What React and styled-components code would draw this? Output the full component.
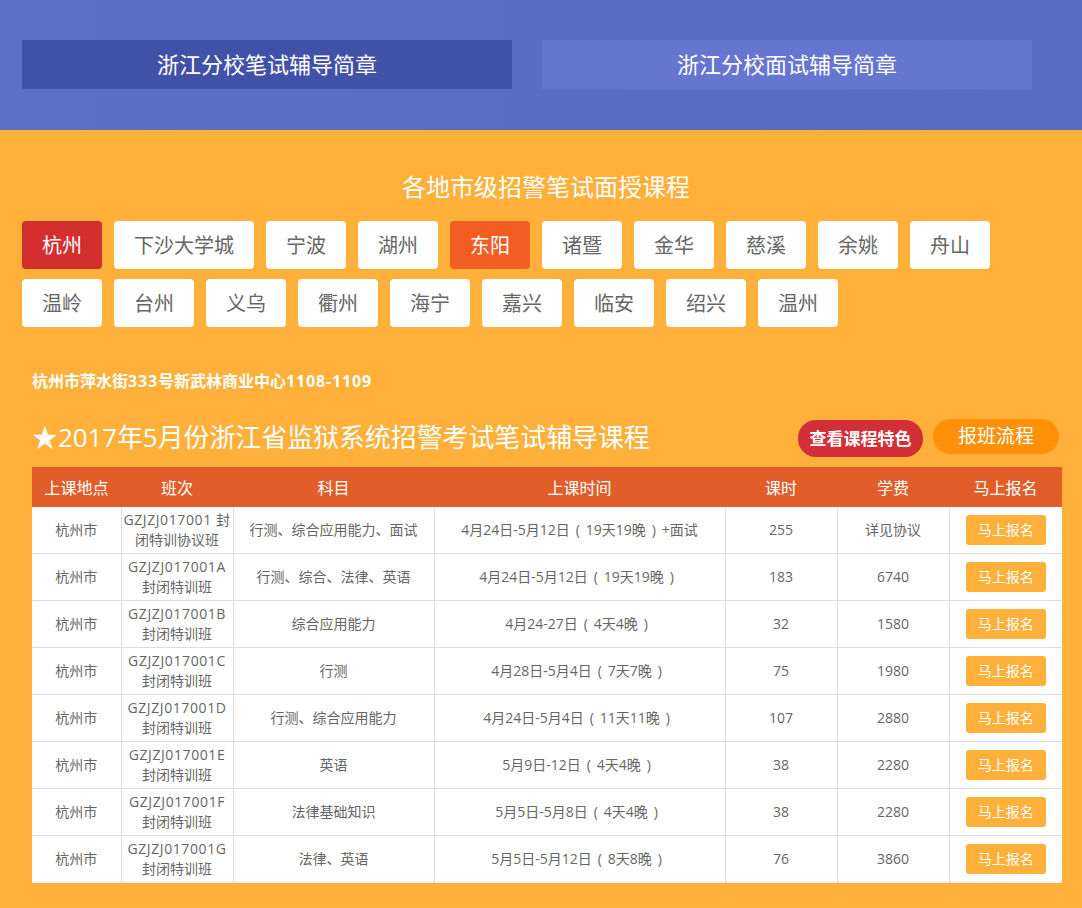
import React from 'react';
import styled, { createGlobalStyle } from 'styled-components';

const GlobalStyle = createGlobalStyle`
  html, body {
    margin: 0;
    padding: 0;
    background: #ffb03b;
  }
  body {
    font-family: "Open Sans", "Noto Sans CJK SC", sans-serif;
    color: #555;
  }
`;

const Banner = styled.header`
  height: 130px;
  box-sizing: border-box;
  padding: 40px 50px 0 22px;
  display: flex;
  gap: 30px;
  background: linear-gradient(90deg, #5e6fc5 0%, #5a6bc2 100%);
`;

const BannerLink = styled.a`
  flex: 1;
  height: 49px;
  line-height: 49px;
  text-align: center;
  color: #fff;
  font-size: 22px;
  background: ${(props) => (props.active ? '#4251a8' : '#6575d0')};
`;

const Main = styled.main`
  padding: 42px 20px 25px 22px;
`;

const SectionTitle = styled.h2`
  margin: 0 0 19px;
  padding-left: 8px;
  height: 30px;
  line-height: 30px;
  text-align: center;
  color: #fff;
  font-size: 24px;
  font-weight: 400;
`;

const Cities = styled.div`
  display: flex;
  flex-wrap: wrap;
  gap: 10px 12px;
  width: 1000px;
`;

const City = styled.a`
  height: 48px;
  line-height: 50px;
  padding: 0 20px;
  border-radius: 4px;
  font-size: 20px;
  background: ${(props) => props.bg || '#fff'};
  color: ${(props) => (props.bg ? '#fff' : '#666')};
`;

const Address = styled.p`
  margin: 42px 0 0 10px;
  height: 24px;
  line-height: 24px;
  color: #fff;
  font-size: 16px;
  font-weight: 700;
`;

const Digits = styled.span`
  letter-spacing: 0.85px;
`;

const CourseHead = styled.div`
  display: flex;
  height: 62px;
  margin: 12px 0 0 10px;
  width: 1027px;
`;

const CourseTitle = styled.h3`
  flex: 1;
  align-self: center;
  margin: 0;
  color: #fff;
  font-size: 26px;
  font-weight: 400;
  letter-spacing: -0.1px;
`;

const Pill = styled.a`
  height: ${(props) => props.h}px;
  line-height: ${(props) => props.h}px;
  margin-top: ${(props) => props.top}px;
  margin-left: 10px;
  padding: 0 ${(props) => props.pad}px;
  border-radius: 18px;
  color: #fff;
  font-size: ${(props) => props.size}px;
  font-weight: ${(props) => props.weight};
  background: ${(props) => props.bg};
`;

const Table = styled.table`
  width: 1030px;
  margin-left: 10px;
  border-collapse: collapse;
  table-layout: fixed;
  background: #fff;
  font-size: 14px;
  text-align: center;

  tbody tr:first-child td {
    border-top: 0;
  }
  tbody tr:last-child td {
    border-bottom-color: #eee;
  }
  td:first-child {
    border-left: 0;
  }
  td:last-child {
    border-right: 0;
  }
`;

const HeadCell = styled.th`
  height: 40px;
  padding: 0;
  background: #e15e2b;
  color: #fff;
  font-size: 16px;
  font-weight: 400;
`;

const Cell = styled.td`
  height: 46px;
  padding: 0;
  border: 1px solid #ddd;
  line-height: 20px;
  color: #666;
`;

const Code = styled.span`
  letter-spacing: 0.6px;
`;

const Paren = styled.span`
  display: inline-block;
  width: 16px;
  text-align: center;
`;

const SignUp = styled.a`
  display: block;
  width: 80px;
  height: 30px;
  line-height: 30px;
  margin: 0 auto;
  border-radius: 3px;
  background: #ffb03b;
  color: #fff;
`;

const cities = [
  ['杭州', '#d32f2f'], ['下沙大学城'], ['宁波'], ['湖州'], ['东阳', '#f15d22'], ['诸暨'], ['金华'], ['慈溪'], ['余姚'], ['舟山'],
  ['温岭'], ['台州'], ['义乌'], ['衢州'], ['海宁'], ['嘉兴'], ['临安'], ['绍兴'], ['温州'],
];

const columns = [
  ['上课地点', 89], ['班次', 112], ['科目', 201], ['上课时间', 291], ['课时', 112], ['学费', 112], ['马上报名', 113],
];

const courses = [
  ['GZJZJ017001 封', '闭特训协议班', '行测、综合应用能力、面试', '4月24日-5月12日', '19天19晚', '+面试', '255', '详见协议'],
  ['GZJZJ017001A', '封闭特训班', '行测、综合、法律、英语', '4月24日-5月12日', '19天19晚', '', '183', '6740'],
  ['GZJZJ017001B', '封闭特训班', '综合应用能力', '4月24-27日', '4天4晚', '', '32', '1580'],
  ['GZJZJ017001C', '封闭特训班', '行测', '4月28日-5月4日', '7天7晚', '', '75', '1980'],
  ['GZJZJ017001D', '封闭特训班', '行测、综合应用能力', '4月24日-5月4日', '11天11晚', '', '107', '2880'],
  ['GZJZJ017001E', '封闭特训班', '英语', '5月9日-12日', '4天4晚', '', '38', '2280'],
  ['GZJZJ017001F', '封闭特训班', '法律基础知识', '5月5日-5月8日', '4天4晚', '', '38', '2280'],
  ['GZJZJ017001G', '封闭特训班', '法律、英语', '5月5日-5月12日', '8天8晚', '', '76', '3860'],
];

const App = () => (
  <>
    <GlobalStyle />
    <Banner>
      <BannerLink active>浙江分校笔试辅导简章</BannerLink>
      <BannerLink>浙江分校面试辅导简章</BannerLink>
    </Banner>
    <Main>
      <SectionTitle>各地市级招警笔试面授课程</SectionTitle>
      <Cities>
        {cities.map(([name, bg]) => <City key={name} bg={bg}>{name}</City>)}
      </Cities>
      <Address>
        杭州市萍水街<Digits>333</Digits>号新武林商业中心<Digits>1108-1109</Digits>
      </Address>
      <CourseHead>
        <CourseTitle>★2017年5月份浙江省监狱系统招警考试笔试辅导课程</CourseTitle>
        <Pill h={37} top={15} pad={11.5} size={17} weight={700} bg="#d32f38">查看课程特色</Pill>
        <Pill h={35} top={14} pad={25} size={19} weight={400} bg="#ff9008">报班流程</Pill>
      </CourseHead>
      <Table>
        <colgroup>
          {columns.map(([name, width]) => <col key={name} style={{ width }} />)}
        </colgroup>
        <thead>
          <tr>
            {columns.map(([name]) => <HeadCell key={name}>{name}</HeadCell>)}
          </tr>
        </thead>
        <tbody>
          {courses.map(([code, type, subject, date, span, extra, hours, fee]) => (
            <tr key={code}>
              <Cell>杭州市</Cell>
              <Cell><Code>{code}</Code><br />{type}</Cell>
              <Cell>{subject}</Cell>
              <Cell>{date}<Paren>(</Paren>{span}<Paren>)</Paren>{extra}</Cell>
              <Cell>{hours}</Cell>
              <Cell>{fee}</Cell>
              <Cell><SignUp>马上报名</SignUp></Cell>
            </tr>
          ))}
        </tbody>
      </Table>
    </Main>
  </>
);

export default App;
